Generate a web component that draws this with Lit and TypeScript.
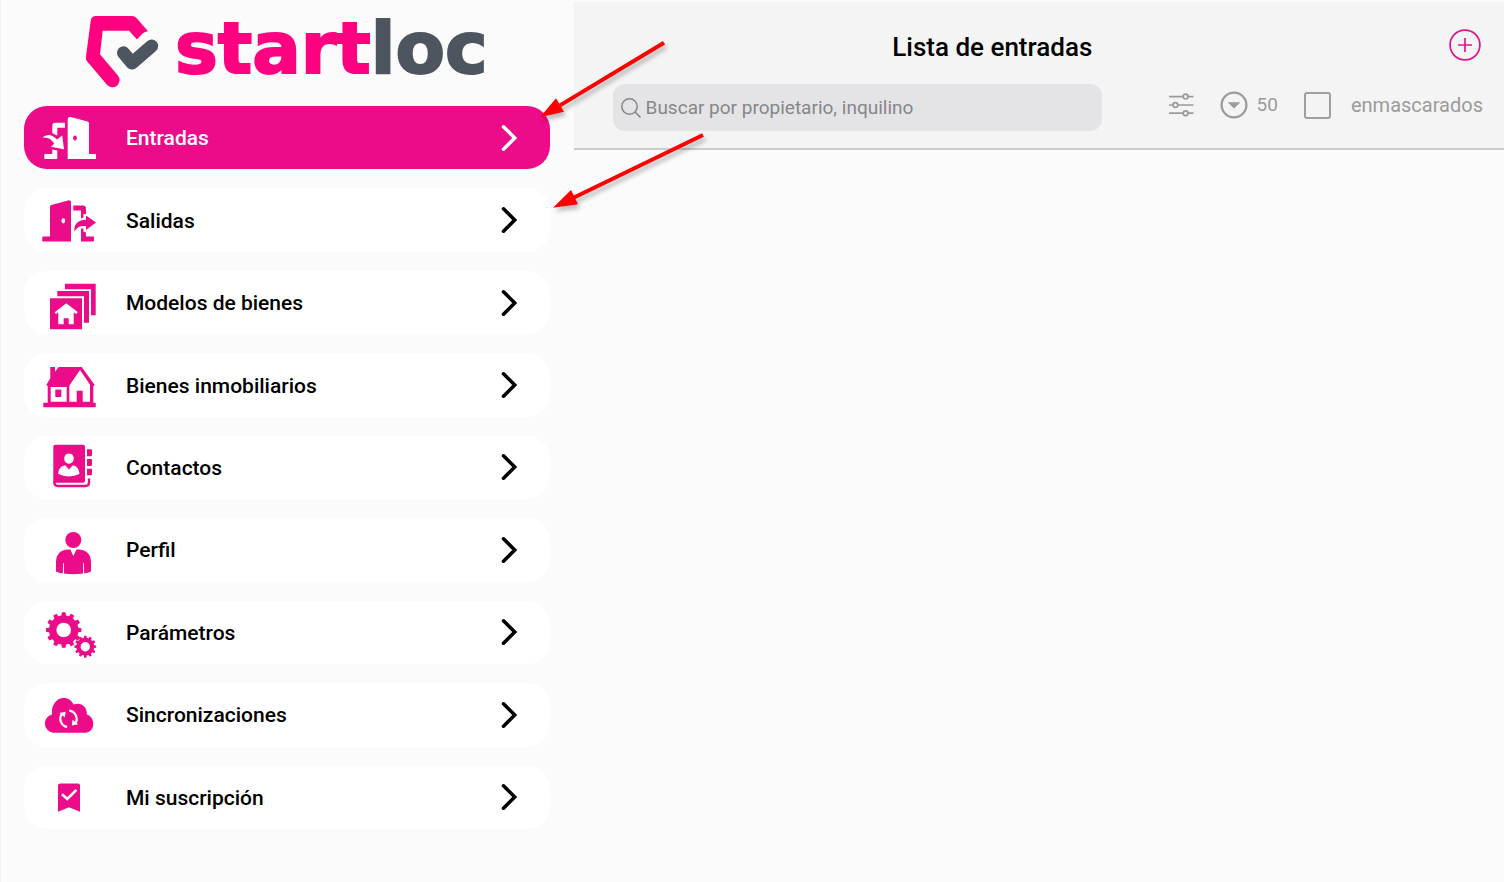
import { LitElement, html, css, svg } from "lit";
import type { TemplateResult } from "lit";
import { customElement, property, state } from "lit/decorators.js";
import { classMap } from "lit/directives/class-map.js";

/** Outline of a toothed wheel with a round hole, centred on (cx, cy). */
function gear(cx: number, cy: number, outer: number, root: number, hole: number, teeth: number): string {
  const step = (Math.PI * 2) / teeth;
  const at = (r: number, a: number) => `${(cx + r * Math.cos(a)).toFixed(2)} ${(cy + r * Math.sin(a)).toFixed(2)}`;
  const points: string[] = [];
  for (let i = 0; i < teeth; i++) {
    const a = i * step - Math.PI / 2;
    points.push(at(root, a - step * 0.3), at(outer, a - step * 0.2), at(outer, a + step * 0.2), at(root, a + step * 0.3));
  }
  return `M${points.join("L")}ZM${cx - hole} ${cy}a${hole} ${hole} 0 1 0 ${hole * 2} 0a${hole} ${hole} 0 1 0 ${-hole * 2} 0Z`;
}

const icons: Record<string, TemplateResult> = {
  entradas: svg`
    <path fill-rule="evenodd" d="M27.7 13.2Q27.7 10.6 30.7 11L47.5 15.6Q49 16 49 17.5V48H55Q56 48 56 49V53H27.7ZM35 29.4a1.9 2.6 0 1 0 .01 0Z"/>
    <path d="M25 16.7V21.7H17.3V29.5Q15 28.6 12.3 27V20Q12.3 16.7 15.6 16.7Z"/>
    <path d="M2.3 31.7C7 27.3 12.5 28.3 17 33.6L22.2 29.6L24 43.2L11 40.7L14.2 37.8C11.5 33 7.5 31 2.3 31.7Z"/>
    <path d="M12.3 43.6L17.3 44.6V53H5Q4.3 53 4.3 52V49Q4.3 48 5.3 48H12.3Z"/>`,
  salidas: svg`
    <path fill-rule="evenodd" d="M2.3 52.5V48.5Q2.3 47.5 3.3 47.5H10V18Q10 16.5 11.5 16L28.8 11.2Q31 11 31 13V52.5ZM23.3 29.2a1.9 2.6 0 1 0 .01 0Z"/>
    <path d="M33.3 16.5H43Q46 16.5 46 19.5V25.2L43.4 25V28.5L41 29.5V21.5H33.3Z"/>
    <path d="M34.3 42.4C34 34.5 38.5 30.6 46 30.7V26.6L56 33.6L46 41V37.2C40.5 36.6 37 38.5 34.3 42.4Z"/>
    <path d="M41 39.6L43.4 39.4V42.5L46 43.5V47.5H53Q54 47.5 54 48.5V51.5Q54 52.5 53 52.5H41Z"/>`,
  modelos: svg`
    <path d="M25 12.7H55.7V44.3H51V18.3H25ZM17.3 20H49V51.7H44V25.3H17.3Z"/>
    <path fill-rule="evenodd" d="M10 27.3H42V58.3H10ZM26.3 32.3L14.7 41.3L16 43L18.3 41.6V53.3H23.7V47.3H28.7V53.3H33.7V41.6L36.3 43L37.7 41Z"/>`,
  bienes: svg`
    <path fill-rule="evenodd" d="M10.3 13H15V17.7L18.7 13H41.7L54.7 31L53.3 32.3V48.7H55.7V53.3H3.3V48.7H7.7V32L6.3 31L10.3 24.3ZM10.7 33V47.7H26.7V33ZM40 16L29.3 31.7V47.7H36.7V36.7H42.7V47.7H50V30.7Z"/>
    <path d="M15.3 35.6H21.3V43H15.3Z"/>`,
  contactos: svg`
    <path fill-rule="evenodd" d="M15.3 8.7H43Q45 8.7 45 10.7V44.7Q45 46.7 43 46.7H13.3V10.7Q13.3 8.7 15.3 8.7ZM29 17.4a4.8 5.2 0 1 0 .01 0ZM25.2 29.2C20.5 30 18.3 33.5 18.3 38Q23 40.4 28.9 40.4T39.4 38C39.4 33.5 37 30 32.8 29.2L29 33.4Z"/>
    <path fill="none" stroke="currentColor" stroke-width="2.3" d="M14.4 45.5V46.5Q14.4 50 18 50H45.5Q49 50 49 46.5V42.5"/>
    <path d="M47 13.3H51Q52 13.3 52 14.3V19.3Q52 20.3 51 20.3H47ZM47 23H51Q52 23 52 24V29Q52 30 51 30H47ZM47 32.7H51Q52 32.7 52 33.7V38.3Q52 39.3 51 39.3H47Z"/>`,
  perfil: svg`
    <circle cx="33.3" cy="22" r="8"/>
    <path d="M28.5 31.4H30.3L33.3 38L36.6 31.4H38.3Q50.8 32 51 44V53.4Q48 55 44.2 55.4L43.8 45H43V55.6Q33.5 57 24 55.6V45H23.2L22.8 55.4Q19 55 16 53.4V44Q16.2 32 28.5 31.4Z"/>`,
  parametros: svg`
    <path fill-rule="evenodd" d=${gear(23.7, 29, 17.8, 14.8, 7.3, 12)} />
    <path fill-rule="evenodd" d=${gear(45.3, 45.7, 11, 9, 4.7, 12)} />`,
  sincronizaciones: svg`
    <path d="M13 49.7A9.2 9.2 0 0 1 12 31.6C11 22.5 16 14.9 23.8 14.9C28.3 14.9 31.6 17.3 33.6 21.6C40 18.6 47.4 23 46.8 31.6C55.5 34 56 49.7 45 49.7Z"/>
    <path fill="none" stroke="#fff" stroke-width="2.2" d="M27.2 44A8.3 8.3 0 0 1 22.4 30.4M29.2 27.7A8.3 8.3 0 0 1 35.2 40.6"/>
    <path fill="#fff" d="M19.3 29.9L25.6 28.8L24.9 34.6ZM38.2 41.2L31.9 42.6L32.5 36.8Z"/>`,
  suscripcion: svg`
    <path d="M20 17.5H38Q40 17.5 40 19.5V45.8L29 41.2L18 45.8V19.5Q18 17.5 20 17.5Z"/>
    <path fill="none" stroke="#fff" stroke-width="2.6" d="M22 28.2L27.3 33L36.4 23.8"/>`,
};

@customElement("menu-link")
export class MenuLink extends LitElement {
  static styles = css`
    :host { display: block; min-height: 60px; }
    .card {
      box-sizing: border-box;
      display: flex;
      align-items: center;
      height: 100%;
      padding: 0 32px 0 16px;
      border-radius: 23px;
      background: #fff;
      color: #000;
      font: 500 21px/28px Roboto, sans-serif;
      text-decoration: none;
    }
    .active { background: #ec0c8a; color: #fff; }
    .icon { flex: none; width: 60px; height: 63px; color: #ec0c8a; fill: currentColor; }
    .active .icon { color: #fff; }
    .label { flex: 1; padding: 1px 0 0 26px; }
    .chevron { flex: none; width: 18px; height: 28px; fill: none; stroke: currentColor; stroke-width: 3.6; stroke-linecap: round; }
  `;

  @property() name = "";
  @property() label = "";
  @property({ type: Boolean }) active = false;

  render() {
    return html`
      <a class=${classMap({ card: true, active: this.active })} href="#${this.name}" aria-current=${this.active ? "page" : "false"}>
        <svg class="icon" viewBox="0 0 60 63" aria-hidden="true">${icons[this.name]}</svg>
        <span class="label">${this.label}</span>
        <svg class="chevron" viewBox="0 0 18 28" aria-hidden="true"><path d="M3.5 2.8L14.7 14L3.5 25.2"/></svg>
      </a>`;
  }
}

@customElement("app-root")
export class AppRoot extends LitElement {
  static styles = css`
    :host {
      display: block;
      position: relative;
      background: #fbfbfb;
      font-family: Roboto, sans-serif;
    }
    .page {
      box-sizing: border-box;
      display: grid;
      grid-template-columns: minmax(0, 8fr) minmax(0, 13fr);
      min-height: 100vh;
      padding-top: 2px;
      border-left: 1px solid #f3f3f3;
    }
    .sidebar {
      display: flex;
      flex-direction: column;
      padding: 0 24px 53px 23px;
    }
    .brand {
      box-sizing: border-box;
      display: flex;
      align-items: flex-start;
      gap: 11px;
      height: 104px;
      margin: 0;
      padding: 8px 0 0 56px;
      font: 700 72px/76px "DejaVu Sans", sans-serif;
      color: #ff0080;
      -webkit-text-stroke: 2px currentColor;
    }
    .mark { flex: none; width: 84px; height: 84px; }
    .loc { color: #4d555e; }
    .menu { flex: 1; display: grid; grid-auto-rows: 1fr; gap: 19px; }
    .toolbar {
      box-sizing: border-box;
      height: 148px;
      padding: 26px 21px 0 39px;
      background: #f4f4f4;
      border-bottom: 2px solid #cbcbcb;
    }
    .title-row { display: flex; align-items: center; gap: 38px; height: 34px; margin-left: -39px; }
    .title { flex: 1; margin: 0; padding-top: 3px; font: 500 26px/34px Roboto, sans-serif; text-align: center; color: #000; }
    button { padding: 0; border: 0; background: none; color: #9b9b9b; font: 400 19px/28px Roboto, sans-serif; cursor: pointer; }
    .add { display: flex; margin-right: 2px; color: #e0148a; }
    .tools { display: flex; align-items: center; gap: 66px; height: 47px; margin-top: 22px; }
    .search {
      flex: 1;
      display: flex;
      align-items: center;
      gap: 5px;
      height: 47px;
      padding: 0 8px;
      border-radius: 12px;
      background: #e4e4e6;
      color: #868688;
    }
    .field { flex: 1; min-width: 0; padding: 0; border: 0; outline: 0; background: none; color: #333; font: 400 19px/28px Roboto, sans-serif; }
    .field::placeholder { color: #868688; opacity: 1; }
    .options { display: flex; align-items: center; gap: 26px; padding-bottom: 5px; }
    .filters { display: flex; align-items: center; height: 28px; }
    .limit { display: flex; align-items: center; gap: 9px; }
    .masked { display: flex; align-items: center; gap: 20px; color: #9b9b9b; font: 400 20px/28px Roboto, sans-serif; }
    .box { appearance: none; box-sizing: border-box; width: 27px; height: 27px; margin: 0; border: 2px solid #a0a0a0; border-radius: 3px; }
    .box:checked { background: #ec0c8a; }
    .line { fill: none; stroke: currentColor; }
    .pointers { position: absolute; left: 530px; top: 32px; width: 190px; height: 190px; pointer-events: none; filter: drop-shadow(2px 4px 2px rgba(0, 0, 0, 0.25)); }
  `;

  @state() private current = "entradas";

  private items = [
    ["entradas", "Entradas"],
    ["salidas", "Salidas"],
    ["modelos", "Modelos de bienes"],
    ["bienes", "Bienes inmobiliarios"],
    ["contactos", "Contactos"],
    ["perfil", "Perfil"],
    ["parametros", "Parámetros"],
    ["sincronizaciones", "Sincronizaciones"],
    ["suscripcion", "Mi suscripción"],
  ];

  render() {
    return html`
      <div class="page">
        <aside class="sidebar">
          <h1 class="brand">
            <svg class="mark" viewBox="0 0 84 84" aria-hidden="true">
              <path fill="#ff0080" d="M16 6H52Q54.5 6 56.5 8L68 21.3Q64.5 21.8 62.5 23.6L57 29.5L49 20.7H22.7L20 44.3L37.9 65.6A7 7 0 0 1 27 74.8L6.8 51Q5.6 49.5 6 46.5L10.7 11Q11.3 6 16 6Z"/>
              <path fill="none" stroke="#4d555e" stroke-width="13" stroke-linecap="round" stroke-linejoin="round" d="M43.5 42.8L52 53L71.7 36"/>
            </svg>
            <span>start<span class="loc">loc</span></span>
          </h1>
          <nav class="menu" aria-label="Menú">
            ${this.items.map(([name, label]) => html`
              <menu-link .name=${name} .label=${label} .active=${name === this.current} @click=${() => (this.current = name)}></menu-link>`)}
          </nav>
        </aside>
        <main>
          <header class="toolbar">
            <div class="title-row">
              <h2 class="title">Lista de entradas</h2>
              <button class="add" aria-label="Añadir">
                <svg class="line" width="32" height="32" viewBox="0 0 32 32" stroke-width="1.7"><circle cx="16" cy="16" r="14.9"/><path d="M16 9V23M9 16H23"/></svg>
              </button>
            </div>
            <div class="tools">
              <label class="search">
                <svg class="line" width="20" height="22" viewBox="0 0 20 22" stroke-width="1.5"><circle cx="8.5" cy="9.5" r="7.7"/><path d="M14 15L19.4 20.4"/></svg>
                <input class="field" type="text" aria-label="Buscar" placeholder="Buscar por propietario, inquilino">
              </label>
              <div class="options">
                <button class="filters" aria-label="Filtros">
                  <svg class="line" width="26" height="24" viewBox="0 0 26 24" stroke-width="1.7">
                    <path d="M1 3.6H15M20 3.6H25.5M1 12H4.8M9.8 12H25.5M1 20.2H15M20 20.2H25.5"/>
                    <circle cx="17.6" cy="3.6" r="2.4"/><circle cx="7.4" cy="12" r="2.4"/><circle cx="17.6" cy="20.2" r="2.4"/>
                  </svg>
                </button>
                <button class="limit">
                  <svg width="28" height="28" viewBox="0 0 28 28" aria-hidden="true"><circle class="line" cx="14" cy="14" r="12.4" stroke-width="2.3"/><path fill="currentColor" d="M7.6 11.2H20.4L14 17.6Z"/></svg>
                  <span>50</span>
                </button>
                <label class="masked"><input class="box" type="checkbox"><span>enmascarados</span></label>
              </div>
            </div>
          </header>
        </main>
      </div>
      <svg class="pointers" viewBox="530 32 190 190" aria-hidden="true">
        <g fill="#f00" stroke="#f00">
          <path stroke-width="4" d="M664 42.7L560 105.4M703 135L573 198"/>
          <path stroke="none" d="M540 117.3L556 98.3L564 111.7ZM553 207.7L571 190L578 204.3Z"/>
        </g>
      </svg>`;
  }
}
